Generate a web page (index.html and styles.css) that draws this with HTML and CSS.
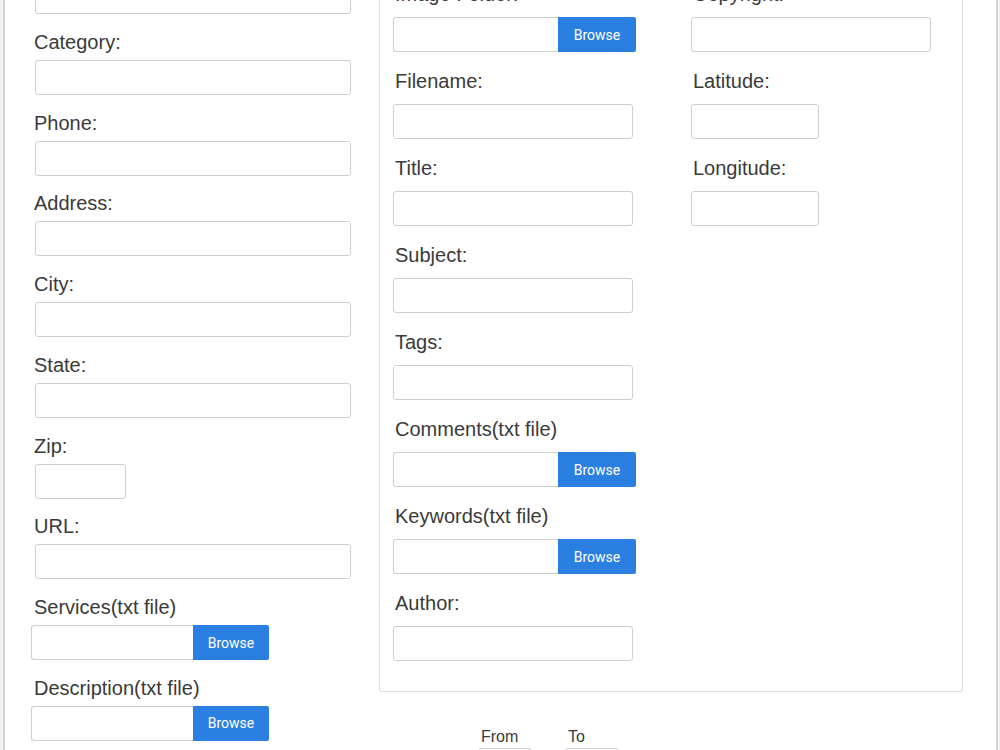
FILE: index.html
```html
<!DOCTYPE html>
<html lang="en">
<head>
  <meta charset="UTF-8" />
  <meta name="viewport" content="width=device-width, initial-scale=1.0"/>
  <title>Listing Details</title>
  <link rel="stylesheet" href="styles.css">
</head>
<body>

  <!-- Listing modal (scrolled part way down) -->
  <div class="modal">
    <div class="modal-body">

      <!-- Business info -->
      <div class="col-left">
        <div class="field">
          <label>Name:</label>
          <input type="text" class="form-input" />
        </div>
        <div class="field">
          <label>Category:</label>
          <input type="text" class="form-input" />
        </div>
        <div class="field">
          <label>Phone:</label>
          <input type="text" class="form-input" />
        </div>
        <div class="field">
          <label>Address:</label>
          <input type="text" class="form-input" />
        </div>
        <div class="field">
          <label>City:</label>
          <input type="text" class="form-input" />
        </div>
        <div class="field">
          <label>State:</label>
          <input type="text" class="form-input" />
        </div>
        <div class="field">
          <label>Zip:</label>
          <input type="text" class="form-input zip" />
        </div>
        <div class="field">
          <label>URL:</label>
          <input type="text" class="form-input" />
        </div>
        <div class="field">
          <label>Services(txt file)</label>
          <div class="input-group">
            <input type="text" class="form-input" readonly />
            <button class="browse-btn">Browse</button>
          </div>
        </div>
        <div class="field">
          <label>Description(txt file)</label>
          <div class="input-group">
            <input type="text" class="form-input" readonly />
            <button class="browse-btn">Browse</button>
          </div>
        </div>
      </div>

      <!-- Image meta data -->
      <div class="col-right">
        <fieldset class="details">
          <div class="details-grid">
            <div class="col-mid">
              <div class="field">
                <label>Image Folder:</label>
                <div class="input-group">
                  <input type="text" class="form-input" readonly />
                  <button class="browse-btn">Browse</button>
                </div>
              </div>
              <div class="field">
                <label>Filename:</label>
                <input type="text" class="form-input" />
              </div>
              <div class="field">
                <label>Title:</label>
                <input type="text" class="form-input" />
              </div>
              <div class="field">
                <label>Subject:</label>
                <input type="text" class="form-input" />
              </div>
              <div class="field">
                <label>Tags:</label>
                <input type="text" class="form-input" />
              </div>
              <div class="field">
                <label>Comments(txt file)</label>
                <div class="input-group">
                  <input type="text" class="form-input" readonly />
                  <button class="browse-btn">Browse</button>
                </div>
              </div>
              <div class="field">
                <label>Keywords(txt file)</label>
                <div class="input-group">
                  <input type="text" class="form-input" readonly />
                  <button class="browse-btn">Browse</button>
                </div>
              </div>
              <div class="field">
                <label>Author:</label>
                <input type="text" class="form-input" />
              </div>
            </div>

            <div class="col-meta">
              <div class="field">
                <label>Copyright:</label>
                <input type="text" class="form-input" />
              </div>
              <div class="field">
                <label>Latitude:</label>
                <input type="text" class="form-input short" />
              </div>
              <div class="field">
                <label>Longitude:</label>
                <input type="text" class="form-input short" />
              </div>
            </div>
          </div>
        </fieldset>

        <div class="date-range">
          <div class="date-item">
            <label>From</label>
            <input type="text" class="date-input" />
          </div>
          <div class="date-item">
            <label>To</label>
            <input type="text" class="date-input" />
          </div>
        </div>
      </div>

    </div>
  </div>

</body>
</html>
```

FILE: styles.css
```css
* { box-sizing: border-box; }
html, body { height: 100%; }
body {
  margin: 0;
  background-color: #f2f2f2;
  color: #3a3a3a;
  font-family: 'Liberation Sans', Arial, sans-serif;
  overflow: hidden;
}

.modal {
  margin-left: 3px;
  width: 995px;
  height: 100vh;
  background-color: #fff;
  border-left: 2px solid #d4d4d4;
  border-right: 2px solid #d4d4d4;
  overflow: hidden;
}

.modal-body {
  display: flex;
  gap: 28px;
  padding-left: 30px;
  margin-top: -49px;
}

label {
  display: block;
  font-size: 20px;
  line-height: 20px;
  margin: 0 0 8px -1px;
}

.form-input {
  display: block;
  width: 100%;
  height: 35px;
  padding: 6px 10px;
  border: 1px solid #cfcfcf;
  border-radius: 3px;
  background-color: #fff;
  color: #333;
  font-family: inherit;
  font-size: 14px;
}

/* Left column */
.col-left { width: 316px; flex-shrink: 0; }
.col-left .field { margin-bottom: 17.75px; }
.zip { width: 91px; }

.input-group {
  display: flex;
  width: 238px;
  margin-left: -4px;
}

.input-group .form-input {
  flex: 1;
  width: auto;
  min-width: 0;
  border-right: none;
  border-radius: 3px 0 0 3px;
}

.browse-btn {
  width: 76px;
  height: 35px;
  flex-shrink: 0;
  padding: 0;
  border: none;
  border-radius: 0 2px 2px 0;
  background-color: #2b7fe1;
  color: #fff;
  font-family: Roboto, 'Open Sans', sans-serif;
  font-size: 14px;
  cursor: pointer;
}

.browse-btn:hover { background-color: #1f6cc7; }

/* Right column */
.col-right { width: 584px; flex-shrink: 0; }

.details {
  margin: 13px 0 0;
  padding: 19px 0 11px 13px;
  border: 1px solid #ddd;
  border-radius: 2px;
  min-width: 0;
}

.details-grid {
  display: flex;
  gap: 55px;
}

.details .field { margin-bottom: 19px; }
.details label { margin: 0 0 13px 2px; }

.col-mid { width: 243px; }
.col-mid .form-input { width: 240px; }
.col-mid .input-group { width: 243px; margin-left: 0; }
.col-mid .input-group .form-input { width: auto; }
.col-mid .browse-btn { width: 78px; }

.col-meta { width: 240px; }
.col-meta .short { width: 128px; }

/* Date range */
.date-range {
  display: flex;
  gap: 35px;
  padding-left: 100px;
  margin-top: 36px;
}

.date-item { width: 52px; }

.date-item label {
  font-size: 16px;
  line-height: 18px;
  margin: 0 0 2px 2px;
}

.date-input {
  display: block;
  width: 52px;
  height: 28px;
  border: 1px solid #cfcfcf;
  border-radius: 2px;
}
```
